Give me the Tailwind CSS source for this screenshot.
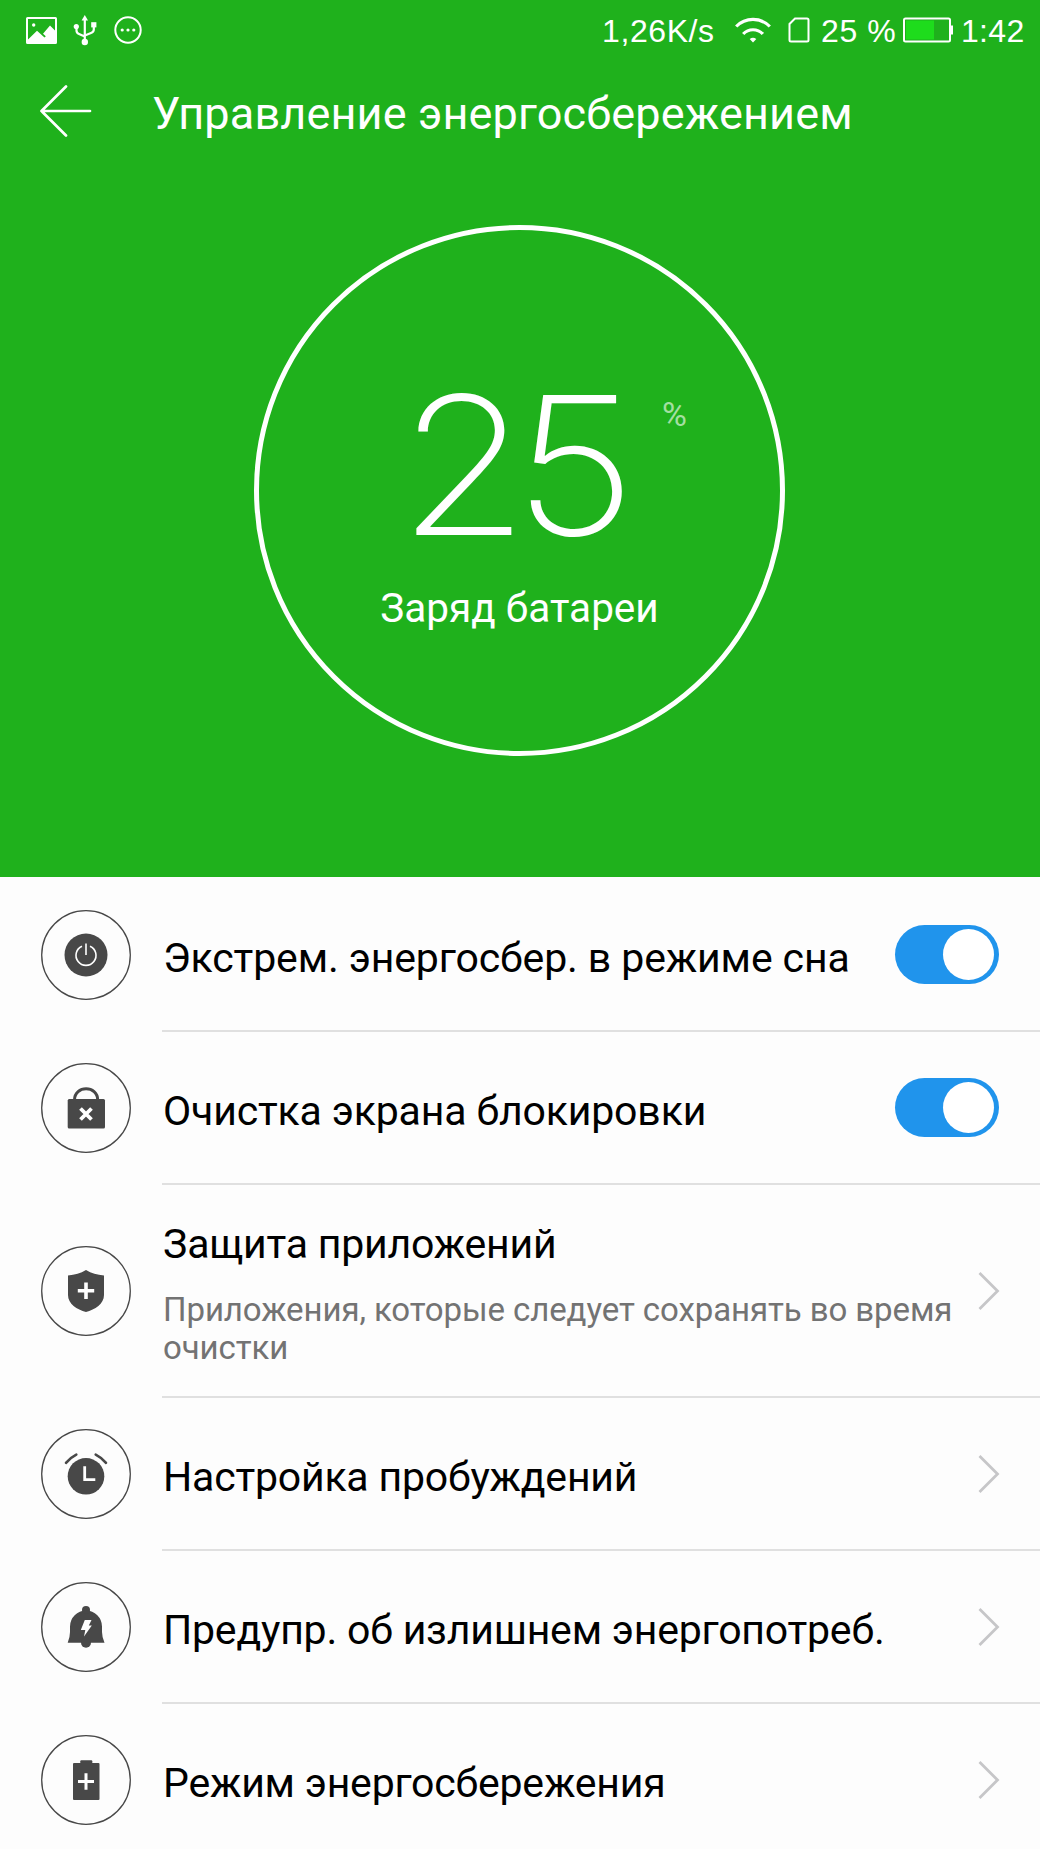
<!doctype html>
<html lang="ru">
<head>
    <meta charset="UTF-8">
    <meta name="viewport" content="width=device-width, initial-scale=1.0">
    <title>Управление энергосбережением</title>
    <script src="https://cdn.jsdelivr.net/npm/@tailwindcss/browser@4"></script>
</head>
<body class="bg-[#fdfdfd] font-['Roboto',sans-serif] w-[1040px] h-[1849px] overflow-hidden">
<header class="bg-[#1fb11c] text-white h-[877px]">
    <!-- status bar -->
    <div class="flex items-center h-[60px] pl-[26px] font-['Liberation_Sans',sans-serif] text-[32px] leading-none whitespace-nowrap">
        <div class="flex shrink-0 items-center w-[575px]">
            <svg class="w-[31px] h-[27px]" viewBox="0 0 31 27" fill="none">
                <rect x="1" y="1" width="29" height="25" rx="0.5" stroke="#fff" stroke-width="2"/>
                <circle cx="7.7" cy="8" r="1.7" fill="#fff"/>
                <path d="M1.5 25V23L11 13.8L18.500 20.500L19.800 19.200L17 16.800L24 8.500L29.500 14V25Z" fill="#fff"/>
            </svg>
            <svg class="w-6 h-[31px] ml-4" viewBox="0 0 24 31" fill="none" stroke="#fff" stroke-width="2.200">
                <path d="M11.800 4V27M3.500 11V15.500Q3.500 18 6 19L11.800 21.500M20.800 11V14.500Q20.800 17 18 18L11.800 20.500"/>
                <path d="M11.800 0L15 5.500H8.600Z" fill="#fff" stroke="none"/>
                <circle cx="3.300" cy="11.500" r="2.600" fill="#fff" stroke="none"/>
                <rect x="18.200" y="7.200" width="5.200" height="5.200" fill="#fff" stroke="none"/>
                <circle cx="11.800" cy="27" r="3.200" fill="#fff" stroke="none"/>
            </svg>
            <svg class="w-7 h-7 ml-[17px]" viewBox="0 0 28 28" fill="#fff">
                <circle cx="14" cy="14" r="12.700" fill="none" stroke="#fff" stroke-width="2"/>
                <circle cx="8.200" cy="14" r="1.600"/>
                <circle cx="14" cy="14" r="1.600"/>
                <circle cx="19.800" cy="14" r="1.600"/>
            </svg>
        </div>
        <span class="shrink-0 w-[134px] pl-[1px] pt-[2px] tracking-[0.6px]">1,26K/s</span>
        <svg class="shrink-0 w-[36px] h-[26px]" viewBox="0 0 36 26" fill="none" stroke="#fff" stroke-width="3.200">
            <path d="M1.200 9.500C10.500 0 25.500 0 34.800 9.500"/>
            <path d="M8.200 17C13.500 11.300 22.500 11.300 27.800 17"/>
            <path d="M18 25.500L14.700 22Q18 19.500 21.300 22Z" fill="#fff" stroke="none"/>
        </svg>
        <svg class="shrink-0 w-[22px] h-[26px] ml-[17px]" viewBox="0 0 22 26" fill="none" stroke="#fff" stroke-width="2">
            <path d="M7 1.500H19Q20.500 1.500 20.500 3V23Q20.500 24.500 19 24.500H3Q1.500 24.500 1.500 23V7Z"/>
        </svg>
        <span class="shrink-0 w-[93px] pl-[11px] pt-[2px] tracking-[0.6px]">25 %</span>
        <svg class="shrink-0 w-[50px] h-[26px]" viewBox="0 0 50 26">
            <rect x="1" y="1.500" width="46" height="23" rx="1.500" fill="none" stroke="#fff" stroke-width="2"/>
            <rect x="3" y="3.500" width="28" height="19" fill="#1edc1c"/>
            <rect x="47" y="8.500" width="3" height="9" fill="#fff"/>
        </svg>
        <span class="pl-[8px] pt-[2px] tracking-[0.3px]">1:42</span>
    </div>
    <!-- title bar -->
    <div class="flex items-center h-[102px] pl-10">
        <svg class="w-[52px] h-[52px]" viewBox="0 0 52 52" fill="none" stroke="#fff" stroke-width="2.700" stroke-linecap="round" stroke-linejoin="round">
            <path d="M26 1.500L1.500 26L26 50.500M1.500 26H50"/>
        </svg>
        <h1 class="pl-[60px] pt-[4px] text-[45px] leading-none tracking-[0.16px] whitespace-nowrap">Управление энергосбережением</h1>
    </div>
    <!-- charge level -->
    <div class="relative flex flex-col items-center w-[531px] h-[531px] mt-[63px] ml-[254px] pt-[139px] border-5 border-white rounded-full">
        <div class="pr-[18px] scale-x-110 font-['Inter',sans-serif] font-extralight text-[193px] leading-none tracking-[-14px]">25</div>
        <span class="absolute left-[403px] top-[167px] text-[34px] leading-none text-white/60">%</span>
        <p class="mt-[22px] text-[40.500px] leading-[48px]">Заряд батареи</p>
    </div>
</header>
<main class="pt-[2px] text-black text-[41px] leading-[48px] tracking-[-0.2px] whitespace-nowrap">
    <div class="flex items-center h-[153px] pl-[41px]">
        <svg class="shrink-0 w-[90px] h-[90px] mb-[2px]" viewBox="0 0 90 90" fill="none">
            <circle cx="45" cy="45" r="44.300" stroke="#484848" stroke-width="1.300"/>
            <circle cx="45" cy="45" r="21.500" fill="#484848"/>
            <path d="M41 36.200A10 10 0 1 0 49 36.200M45 33.500V45" stroke="#fff" stroke-width="1.600"/>
        </svg>
        <div class="flex flex-1 items-center h-full ml-[31px] pl-[1px] pr-[41px] border-b-2 border-[#e0e0e0]">
            <span class="flex-1 pt-[6px] tracking-[-0.12px]">Экстрем. энергосбер. в режиме сна</span>
            <button class="flex items-center justify-end w-[104px] h-[59px] pr-[5px] rounded-full bg-[#2094ec]"><span class="w-[51px] h-[51px] rounded-full bg-white"></span></button>
        </div>
    </div>
    <div class="flex items-center h-[153px] pl-[41px]">
        <svg class="shrink-0 w-[90px] h-[90px] mb-[2px]" viewBox="0 0 90 90" fill="none">
            <circle cx="45" cy="45" r="44.300" stroke="#484848" stroke-width="1.300"/>
            <rect x="26.700" y="36" width="37.300" height="29.500" rx="1.500" fill="#484848"/>
            <path d="M33.500 37C33.500 22 56.700 22 56.700 37" stroke="#484848" stroke-width="3"/>
            <path d="M39.500 45.500L50.500 56.500M50.500 45.500L39.500 56.500" stroke="#fff" stroke-width="3.800"/>
        </svg>
        <div class="flex flex-1 items-center h-full ml-[31px] pl-[1px] pr-[41px] border-b-2 border-[#e0e0e0]">
            <span class="flex-1 pt-[6px] tracking-[-0.15px]">Очистка экрана блокировки</span>
            <button class="flex items-center justify-end w-[104px] h-[59px] pr-[5px] rounded-full bg-[#2094ec]"><span class="w-[51px] h-[51px] rounded-full bg-white"></span></button>
        </div>
    </div>
    <div class="flex items-center h-[213px] pl-[41px]">
        <svg class="shrink-0 w-[90px] h-[90px] mb-[2px]" viewBox="0 0 90 90" fill="none">
            <circle cx="45" cy="45" r="44.300" stroke="#484848" stroke-width="1.300"/>
            <path d="M45 24C50.500 27.300 56 28.800 63 29.500V49C63 58 54 63.500 45 66C36 63.500 27 58 27 49V29.500C34 28.800 39.500 27.300 45 24Z" fill="#484848"/>
            <path d="M36.800 44.800H53.200M45 36.600V53" stroke="#fff" stroke-width="3.600"/>
        </svg>
        <div class="flex flex-1 items-center h-full ml-[31px] pl-[1px] pr-[60px] border-b-2 border-[#e0e0e0]">
            <div class="flex-1 pt-[5px]">
                <p>Защита приложений</p>
                <p class="mt-[23px] text-[33px] leading-[37.500px] tracking-[-0.09px] text-[#737373]">Приложения, которые следует сохранять во время<br>очистки</p>
            </div>
            <svg class="shrink-0 w-[22px] h-[38px] -mr-[20px]" viewBox="0 0 22 38" fill="none" stroke="#c6c6c8" stroke-width="2.800"><path d="M1.500 1L19.500 19L1.500 37"/></svg>
        </div>
    </div>
    <div class="flex items-center h-[153px] pl-[41px]">
        <svg class="shrink-0 w-[90px] h-[90px] mb-[2px]" viewBox="0 0 90 90" fill="none">
            <circle cx="45" cy="45" r="44.300" stroke="#484848" stroke-width="1.300"/>
            <circle cx="45" cy="47.300" r="18.300" fill="#484848"/>
            <path d="M43.700 37.300V50.600H54.300" stroke="#fff" stroke-width="2.800"/>
            <path d="M25 33.800Q29.500 28.500 35.300 25.600M65 33.800Q60.500 28.500 54.700 25.600" stroke="#484848" stroke-width="2.600" stroke-linecap="round"/>
        </svg>
        <div class="flex flex-1 items-center h-full ml-[31px] pl-[1px] pr-[40px] border-b-2 border-[#e0e0e0]">
            <span class="flex-1 pt-[6px]">Настройка пробуждений</span>
            <svg class="w-[22px] h-[38px]" viewBox="0 0 22 38" fill="none" stroke="#c6c6c8" stroke-width="2.800"><path d="M1.500 1L19.500 19L1.500 37"/></svg>
        </div>
    </div>
    <div class="flex items-center h-[153px] pl-[41px]">
        <svg class="shrink-0 w-[90px] h-[90px] mb-[2px]" viewBox="0 0 90 90" fill="none">
            <circle cx="45" cy="45" r="44.300" stroke="#484848" stroke-width="1.300"/>
            <path d="M26.700 60.700Q29 55 29 50V44.500A16 16 0 0 1 61 44.500V50Q61 55 63.500 60.700Z" fill="#484848"/>
            <circle cx="45" cy="28" r="4" fill="#484848"/>
            <circle cx="45" cy="60.700" r="5" fill="#484848"/>
            <path d="M43.800 38H50.500L47.800 43.500H50.800L43 54.500L44.300 48H39.800Z" fill="#fff"/>
        </svg>
        <div class="flex flex-1 items-center h-full ml-[31px] pl-[1px] pr-[40px] border-b-2 border-[#e0e0e0]">
            <span class="flex-1 pt-[6px]">Предупр. об излишнем энергопотреб.</span>
            <svg class="w-[22px] h-[38px]" viewBox="0 0 22 38" fill="none" stroke="#c6c6c8" stroke-width="2.800"><path d="M1.500 1L19.500 19L1.500 37"/></svg>
        </div>
    </div>
    <div class="flex items-center h-[153px] pl-[41px]">
        <svg class="shrink-0 w-[90px] h-[90px] mb-[2px]" viewBox="0 0 90 90" fill="none">
            <circle cx="45" cy="45" r="44.300" stroke="#484848" stroke-width="1.300"/>
            <rect x="32" y="28" width="26.500" height="37" rx="1" fill="#484848"/>
            <rect x="39.300" y="25.300" width="12" height="4" rx="1" fill="#484848"/>
            <path d="M37 46.500H53M45 38.300V54.700" stroke="#fff" stroke-width="3"/>
        </svg>
        <div class="flex flex-1 items-center h-full ml-[31px] pl-[1px] pr-[40px] pb-[2px]">
            <span class="flex-1 pt-[6px]">Режим энергосбережения</span>
            <svg class="w-[22px] h-[38px]" viewBox="0 0 22 38" fill="none" stroke="#c6c6c8" stroke-width="2.800"><path d="M1.500 1L19.500 19L1.500 37"/></svg>
        </div>
    </div>
</main>
</body>
</html>
